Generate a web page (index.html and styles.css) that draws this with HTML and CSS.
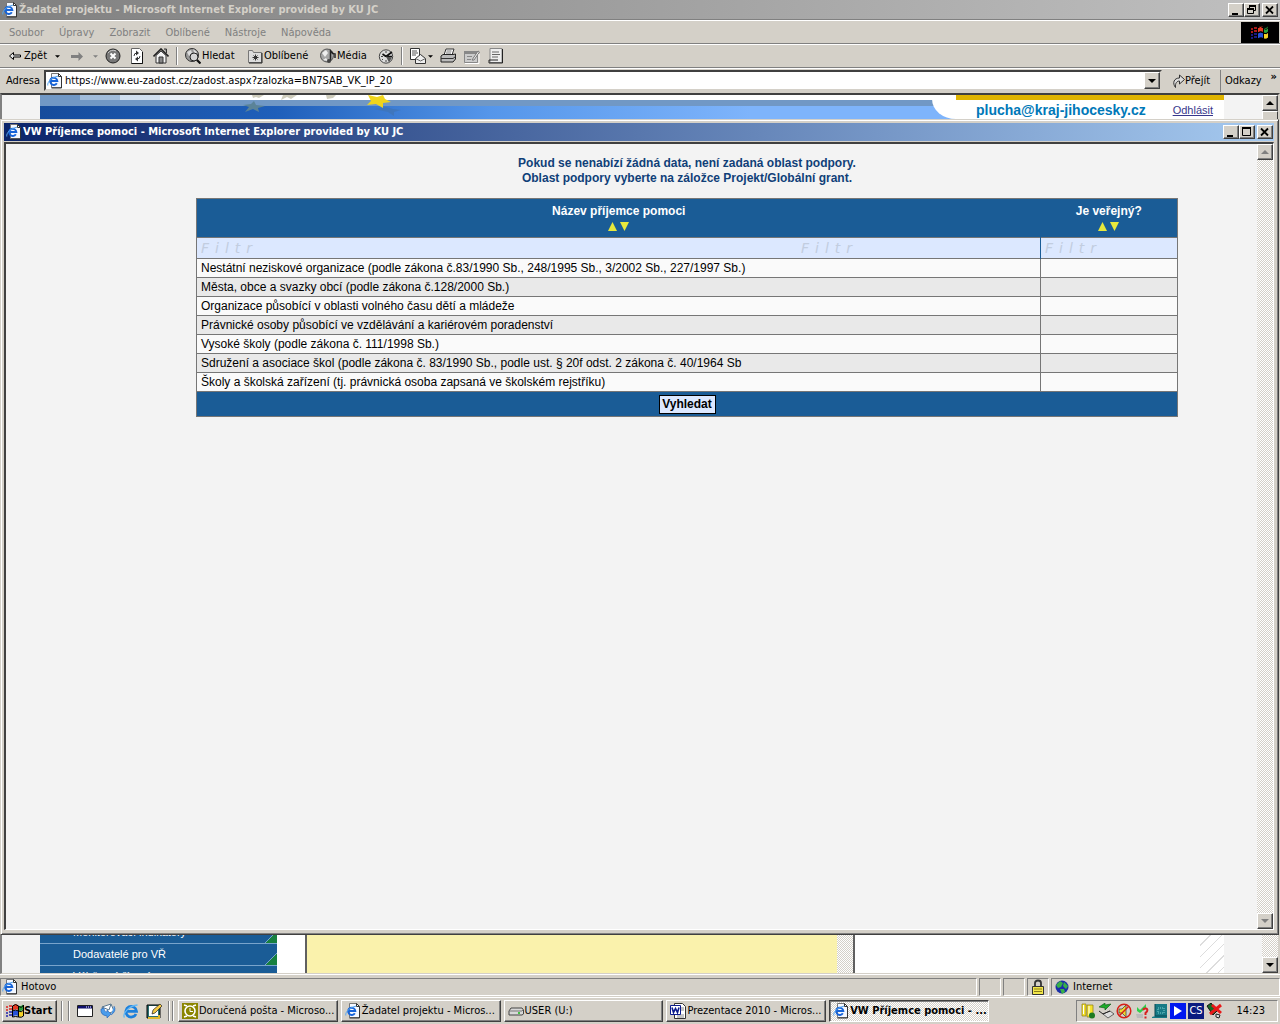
FILE: index.html
```html
<!DOCTYPE html>
<html lang="cs">
<head>
<meta charset="utf-8">
<title>VW Příjemce pomoci</title>
<link rel="stylesheet" href="styles.css">
</head>
<body>
<svg class="sprite" aria-hidden="true">
  <symbol id="ie-page" viewBox="0 0 16 16"><path d="M4.500.5h7l3 3v11h-10z" fill="#f4f8ff" stroke="#777"/><path d="M14.500 4v11h-10" fill="none" stroke="#333"/><path d="M11.500.5v3h3z" fill="#fff" stroke="#333"/><path d="M9.800 10.200A3.600 3.600 0 1 1 10.300 8H3.500" fill="none" stroke="#1663d8" stroke-width="2"/><path d="M.8 12.500C0 9 5 4 11 3.200" fill="none" stroke="#58a8f0"/></symbol>
  <symbol id="ie" viewBox="0 0 16 16"><path d="M13 11A5.300 5.300 0 1 1 13.500 8.300H4" fill="none" stroke="#1c80dc" stroke-width="2.800"/><path d="M1.500 14.500C-1 11 6 2.500 14.500 2" fill="none" stroke="#64b8f4" stroke-width="1.300"/></symbol>
  <symbol id="min" viewBox="0 0 12 10"><path d="M2 8h6v2H2z" fill="#000"/></symbol>
  <symbol id="max" viewBox="0 0 12 10"><path d="M1.500 1.500h8v7h-8zM1 1.500h9" fill="none" stroke="#000"/><path d="M1 0h9v2H1z"/></symbol>
  <symbol id="restore" viewBox="0 0 12 10"><path d="M3.500 3V1h6v4.500H8M1.500 4h6v4.500h-6z" fill="none" stroke="#000"/><path d="M3 0h7v2H3zM1 3h7v2H1z"/></symbol>
  <symbol id="close" viewBox="0 0 12 10"><path d="M2 1.500l7 7M9 1.500l-7 7" stroke="#000" stroke-width="1.800"/></symbol>
  <symbol id="up" viewBox="0 0 8 4"><path d="M0 4L4 0l4 4z"/></symbol>
  <symbol id="down" viewBox="0 0 8 4"><path d="M0 0l4 4 4-4z"/></symbol>
  <symbol id="back" viewBox="0 0 16 16"><path d="M2.500 8l4-3.500V7h7v2h-7v2.500z" fill="#e8e8e8" stroke="#000"/></symbol>
  <symbol id="fwd" viewBox="0 0 16 16"><path d="M14 8.500L9.500 4v3H2v3h7.500v3z" fill="#808080"/></symbol>
  <symbol id="flag" viewBox="0 0 18 16"><g transform="skewY(-5)"><path d="M7 3q3-2 5 0v5q-2-2-5 0z" fill="#e33a22"/><path d="M13 4q2 1 4-1v5q-2 2-4 1z" fill="#28a13c"/><path d="M7 9q3-2 5 0v5q-2-2-5 0z" fill="#2752d8"/><path d="M13 10q2 1 4-1v5q-2 2-4 1z" fill="#f5d228"/></g><path d="M6.500 3q3-3 6 0t5-1v11q-2 2-5 1t-6 0zM12.500 3v11M6.500 8q3-2 6 0t5-1" fill="none" stroke="#000"/><path d="M0 4h2M3 3h3M0 7h2M3 6h3" stroke="#d22" stroke-width="1.500"/><path d="M0 10h2M3 9h3M0 13h2M3 12h3" stroke="#22a" stroke-width="1.500"/></symbol>
</svg>

<main class="browser">
  <header class="titlebar inactive">
    <svg class="ico"><use href="#ie-page"/></svg><span class="caption">Žadatel projektu - Microsoft Internet Explorer provided by KU JC</span>
    <div class="winbtns"><button aria-label="Minimalizovat"><svg><use href="#min"/></svg></button><button aria-label="Obnovit"><svg><use href="#restore"/></svg></button><button class="x" aria-label="Zavřít"><svg><use href="#close"/></svg></button></div>
  </header>

  <nav class="band menubar"><span>Soubor</span><span>Úpravy</span><span>Zobrazit</span><span>Oblíbené</span><span>Nástroje</span><span>Nápověda</span>
    <div class="throbber"><svg width="18" height="16"><use href="#flag"/></svg></div>
  </nav>

  <div class="band toolbar">
    <button class="tool t-back"><svg class="ico"><use href="#back"/></svg>Zpět</button>
    <button class="tool t-caret" aria-label="Historie zpět"><svg class="caret"><use href="#down"/></svg></button>
    <button class="tool" aria-label="Vpřed"><svg class="ico"><use href="#fwd"/></svg></button>
    <button class="tool t-caret off" aria-label="Historie vpřed"><svg class="caret"><use href="#down"/></svg></button>
    <button class="tool" aria-label="Zastavit"><svg class="ico" viewBox="0 0 16 16"><circle cx="8" cy="8" r="7" fill="#777" stroke="#222"/><path d="M3 5a6 6 0 0 1 8-2" fill="none" stroke="#ccc"/><path d="M5.500 5.500l5 5M10.500 5.500l-5 5" stroke="#fff" stroke-width="2"/></svg></button>
    <button class="tool" aria-label="Aktualizovat"><svg class="ico" viewBox="0 0 16 16"><path d="M2.500.5h8l3 3v12h-11z" fill="#fff" stroke="#666"/><path d="M13.500 4v11.500h-11" fill="none" stroke="#111"/><path d="M5 8q0-3 3-3M11 8q0 3-3 3" fill="none" stroke="#333"/><path d="M7 2.500L10 5 7 7.500zM9 8.500L6 11l3 2.500z" fill="#333"/></svg></button>
    <button class="tool" aria-label="Domů"><svg class="ico" viewBox="0 0 16 16"><path d="M3 7.500v7.500h10V7.500L8 3z" fill="#f4f4f4" stroke="#333"/><path d="M.5 8.500L8 1l7.500 7.500" fill="none" stroke="#222" stroke-width="1.600"/><path d="M11 1h2.500v4" fill="#999" stroke="#333"/><path d="M6 9h4v6H6z" fill="#888" stroke="#333"/></svg></button>
    <i class="sep"></i>
    <button class="tool t-search"><svg class="ico" viewBox="0 0 16 16"><circle cx="7" cy="7" r="6.500" fill="#999" stroke="#333"/><path d="M2 4l4-2 1 3-3 3zM8 1l4 3-2 3z" fill="#ddd"/><circle cx="9" cy="9" r="4" fill="#eee" fill-opacity=".7" stroke="#222"/><path d="M12 12l3.500 3.500" stroke="#111" stroke-width="2.200"/></svg>Hledat</button>
    <button class="tool t-fav"><svg class="ico" viewBox="0 0 16 16"><path d="M1.500 14.500v-12h4l1 2h8v10z" fill="#ddd" stroke="#777"/><path d="M15 5v10H2" fill="none" stroke="#222"/><path d="M8.500 6.500v6M5.500 9.500h6M6.500 7.500l4 4M10.500 7.500l-4 4" stroke="#333"/></svg>Oblíbené</button>
    <button class="tool t-media"><svg class="ico" viewBox="0 0 16 16"><circle cx="7" cy="7.500" r="6.500" fill="#a5a5a5" stroke="#555"/><path d="M2 5l4-3 2 3-3 4zM3 12l3-2 2 3z" fill="#eee"/><path d="M10.500 13V3q2 3 4.500 3v4" fill="none" stroke="#222" stroke-width="1.500"/><circle cx="9" cy="13" r="2" fill="#444"/></svg>Média</button>
    <button class="tool" aria-label="Historie"><svg class="ico" viewBox="0 0 16 16"><circle cx="8" cy="8.500" r="6.700" fill="#ddd" stroke="#444"/><path d="M8 8.500L14 4M8 8.500h6M8 8.500L4.500 6" stroke="#111" stroke-width="1.600"/><path d="M8 3v2M3 8.500h2M8 14v-2M4 12l1-1M12 12l-1-1" stroke="#444"/><path d="M8 8.500l6 1-3 5z" fill="#555"/></svg></button>
    <i class="sep"></i>
    <button class="tool t-mail" aria-label="Pošta"><svg class="ico" viewBox="0 0 16 16"><path d="M.5.500h9v11h-9z" fill="#fff" stroke="#333"/><path d="M2 3h5M2 5h6M2 7h4" stroke="#555"/><path d="M5.500 10.500l5-4 5 4v5h-10z" fill="#eee" stroke="#333"/><path d="M5.500 10.500l5 2.500 5-2.500" fill="none" stroke="#666"/></svg><svg class="caret"><use href="#down"/></svg></button>
    <button class="tool" aria-label="Tisk"><svg class="ico" viewBox="0 0 16 16"><path d="M4 7l2-6h8l-2 6z" fill="#fff" stroke="#333"/><path d="M6.500 3h5M6 5h5" stroke="#777"/><path d="M1 8l2-1.500h10L15.500 6v5L13 14H1z" fill="#bbb" stroke="#222"/><path d="M1 10.500h12l2.500-2" fill="none" stroke="#333"/></svg></button>
    <button class="tool" aria-label="Upravit"><svg class="ico" viewBox="0 0 16 16"><path d="M.5 3.500h13v11H.500z" fill="#ccc" stroke="#888"/><path d="M0 3h14v3H0z" fill="#888"/><path d="M3 8.500h5M3 11.500h4" stroke="#888"/><path d="M8 12l6-9 1.500 1L10 12z" fill="#eee" stroke="#777"/><path d="M1 15.500h14V6" fill="none" stroke="#fff"/></svg></button>
    <button class="tool" aria-label="Diskuse"><svg class="ico" viewBox="0 0 16 16"><path d="M2 .5h12v14H2z" fill="#eee" stroke="#888"/><path d="M14.500 1v14H1v-3h9" fill="none" stroke="#222"/><path d="M4 4h7M4 6.500h8M4 9h6" stroke="#666"/></svg></button>
  </div>

  <div class="band address">
    <label for="url">Adresa</label>
    <div class="urlbox"><svg class="ico"><use href="#ie-page"/></svg><input id="url" value="https://www.eu-zadost.cz/zadost.aspx?zalozka=BN7SAB_VK_IP_20"><button class="drop" aria-label="Seznam adres"><svg class="caret wide"><use href="#down"/></svg></button></div>
    <button class="go"><svg width="13" height="14" viewBox="0 0 13 14"><path d="M3.500 13.500C0 9 2 4 7.500 4V1l5 4.500-5 4.500V7C5 7 3 9 3.500 13.500z" fill="#ddd" stroke="#333"/></svg>Přejít</button>
    <span class="links">Odkazy <b>»</b></span>
  </div>

  <section class="view">
    <div class="page">
      <div class="banner">
        <div class="squares"></div><div class="strip"></div>
        <svg class="stars" viewBox="0 0 200 24"><path d="M14 6l2 4 9 1-7 2 1 4-6-3-8 3 4-5-6-2 8-1z" fill="#5b8398"/><path d="M12 0h12l-5 3-3-1-3 1zM43 0h14l-6 4-4-2-6 3zM86 0h10l-3 3-6 1z" fill="#cfcdbd"/><path d="M134 14l12-2 7 2 8 1-7 2 0 4-6-4z" fill="#3f74b4" opacity=".7"/><path d="M128 0l9 2 6-2 2 4 6 3-8 1 0 5-7-4-9 1 4-4z" fill="#f0d51c"/></svg>
        <div class="account"><a class="mail" href="#ucet">plucha@kraj-jihocesky.cz</a><a class="logout" href="#odhlasit">Odhlásit</a></div>
      </div>
      <div class="content">
        <ul class="sidemenu"><li><a href="#ind">Monitorovací indikátory</a></li><li><a href="#dod">Dodavatelé pro VŘ</a></li><li><a href="#vyb">Výběrová řízení</a></li></ul>
        <div class="panel"><div class="panel-body"></div><div class="track"></div></div>
        <div class="hatch"></div>
      </div>
    </div>
    <div class="scroll live"><button aria-label="Nahoru"><svg class="caret wide"><use href="#up"/></svg></button><div class="thumb"></div><div class="track"></div><button aria-label="Dolů"><svg class="caret wide"><use href="#down"/></svg></button></div>
  </section>

  <footer class="status">
    <div class="cell grow"><svg class="ico"><use href="#ie-page"/></svg>Hotovo</div><div class="cell"></div><div class="cell"></div>
    <div class="cell"><svg class="ico" viewBox="0 0 16 16"><path d="M5 8V4q0-2.500 3-2.500T11 4v4" fill="none" stroke="#333" stroke-width="1.800"/><path d="M2.500 7.500h11v8h-11z" fill="#f2e64a" stroke="#333"/><path d="M4 10h8M4 12.500h8" stroke="#8a7d18"/></svg></div>
    <div class="cell zone"><svg class="ico" viewBox="0 0 16 16"><circle cx="8" cy="8" r="6.500" fill="#1a2ea8"/><path d="M2 6l4-4 3 2-2 4-3 1zM10 3l4 4-2 3-3-3zM6 10l4 0 1 3-3 2z" fill="#38b048"/></svg>Internet</div>
  </footer>
</main>

<footer class="taskbar">
  <button class="start"><svg width="18" height="16"><use href="#flag"/></svg>Start</button>
  <i class="grip"></i>
  <div class="quick">
    <button aria-label="Plocha"><svg class="ico" viewBox="0 0 16 16"><path d="M.5 2.500h15v11H.500z" fill="#fff" stroke="#222"/><path d="M1 3h14v2.500H1z" fill="#10106c"/><path d="M9 4h5" stroke="#fff" stroke-dasharray="1 1"/></svg></button>
    <button aria-label="Outlook"><svg class="ico" viewBox="0 0 16 16"><path d="M2 4l9-3 3 7-9 4z" fill="#fff" stroke="#5a7890"/><path d="M2 4l7 3 2-6" fill="none" stroke="#5a7890"/><path d="M1 6q-1 6 6 7v2l4-4-4-4v2q-3 0-3-4zM14 3q3 5-3 9" fill="#4a9cec" stroke="#2560b0" stroke-width=".6"/></svg></button>
    <button aria-label="Internet Explorer"><svg class="ico"><use href="#ie"/></svg></button>
    <button aria-label="Poznámky"><svg class="ico" viewBox="0 0 16 16"><path d="M1 2h13v13H1z" fill="#2b6f6f" stroke="#000"/><path d="M3 3h9v10H3z" fill="#fff"/><path d="M6 11l1-4 7-6 2 2-7 7z" fill="#f5c842" stroke="#222" stroke-width=".7"/><path d="M2 15h11v-3" fill="none" stroke="#e2b92e" stroke-width="2"/></svg></button>
  </div>
  <i class="grip near"></i>
  <div class="tasks">
    <button><svg class="ico" viewBox="0 0 16 16"><path d="M0 0h16v16H0z" fill="#8a8500"/><path d="M2 2l3 1M14 2l-3 1M2 14l3-1M14 14l-3-1" stroke="#fff" stroke-width="1.500"/><circle cx="8" cy="8" r="5" fill="none" stroke="#fff" stroke-width="1.600"/><path d="M8 5v3.500h3" fill="none" stroke="#fff"/></svg><span>Doručená pošta - Microso...</span></button>
    <button><svg class="ico"><use href="#ie-page"/></svg><span>Žadatel projektu - Micros...</span></button>
    <button><svg class="ico" viewBox="0 0 16 16"><path d="M1 8l2-3h11l1.500 2v4L14 12H1z" fill="#d8d8d8" stroke="#444"/><path d="M1 8h13l1-1" fill="none" stroke="#777"/><path d="M10 10h2" stroke="#1b1" stroke-width="1.500"/></svg><span>USER (U:)</span></button>
    <button><svg class="ico" viewBox="0 0 16 16"><path d="M4.500.5h8l3 3v12h-11z" fill="#fff" stroke="#333"/><path d="M11 5h3M11 7h3M7 12h7M7 14h7" stroke="#888"/><path d="M.5 2.500h10v9H.500z" fill="#fff" stroke="#0a1a8c"/><path d="M2 4.500l1.500 5 2-4 2 4 1.500-5" fill="none" stroke="#0a1a8c" stroke-width="1.600"/></svg><span>Prezentace 2010 - Micros...</span></button>
    <button class="pressed"><svg class="ico"><use href="#ie-page"/></svg><span>VW Příjemce pomoci - ...</span></button>
  </div>
  <div class="tray">
    <svg class="ico" viewBox="0 0 16 16"><path d="M2 1h4v12H2zM7 2h6v12H7z" fill="#f6e32c" stroke="#8a7a10" stroke-width=".7"/><path d="M3.500 2v9M9 3v9" stroke="#fff"/><circle cx="12" cy="12.500" r="3" fill="#1d7a22"/></svg>
    <svg class="ico" viewBox="0 0 16 16"><path d="M5 11l7-3 4 3-6 4z" fill="#ddd" stroke="#333" stroke-width=".7"/><path d="M1 8l4 3 7-3" fill="none" stroke="#222"/><path d="M1 4l6-4v2l6-1-6 6v-2z" fill="#1dac2a" stroke="#0a5012" stroke-width=".6"/></svg>
    <svg class="ico" viewBox="0 0 16 16"><path d="M3 6h3l4-4v12l-4-4H3z" fill="#f0d830" stroke="#333" stroke-width=".7"/><circle cx="8" cy="8" r="6.800" fill="none" stroke="#d82018" stroke-width="1.500"/><path d="M3.500 12.500l9-9" stroke="#d82018" stroke-width="1.500"/></svg>
    <svg class="ico" viewBox="0 0 16 16"><path d="M3 4l3 3 6-6v4L6 10 3 8z" fill="#2ed04a"/><path d="M2 11h7v4H3z" fill="#bbb"/><path d="M9 7q1-2 3-1.500t1 3L11.500 10v2M11.500 13.500v2" fill="none" stroke="#d82020" stroke-width="2"/></svg>
    <svg class="ico" viewBox="0 0 16 16"><path d="M3 1h12v12H3zM0 14l3-1h12v2H0z" fill="#177a86"/><path d="M3 1v12h12" fill="none" stroke="#0b4650"/><path d="M6 5h6v5H6z" fill="none" stroke="#7fd0d0" stroke-dasharray="1 1"/></svg>
    <svg class="ico" viewBox="0 0 16 16"><path d="M0 0h16v16H0z" fill="#0018f0"/><path d="M4 3v10l8-5z" fill="#fff"/></svg>
    <span class="lang">CS</span>
    <svg class="ico" viewBox="0 0 16 16"><path d="M1 3l4-3 6 8-4 4z" fill="#186a26" stroke="#111"/><path d="M10 11l4 1-1 3-3-1z" fill="#ddd" stroke="#222"/><path d="M4 11L15 2M6 2l9 8" stroke="#e81818" stroke-width="3"/></svg>
    <time>14:23</time>
  </div>
</footer>

<div class="popup" role="dialog" aria-label="VW Příjemce pomoci">
  <header class="titlebar">
    <svg class="ico"><use href="#ie-page"/></svg><span class="caption">VW Příjemce pomoci - Microsoft Internet Explorer provided by KU JC</span>
    <div class="winbtns"><button aria-label="Minimalizovat"><svg><use href="#min"/></svg></button><button aria-label="Maximalizovat"><svg><use href="#max"/></svg></button><button class="x" aria-label="Zavřít"><svg><use href="#close"/></svg></button></div>
  </header>
  <div class="popup-view">
    <form class="popup-body">
      <p class="notice">Pokud se nenabízí žádná data, není zadaná oblast podpory.<br>Oblast podpory vyberte na záložce Projekt/Globální grant.</p>
      <table class="grid">
        <colgroup><col><col class="c-public"></colgroup>
        <thead>
          <tr class="head">
            <th>Název příjemce pomoci<div class="sort"><button type="button" aria-label="Vzestupně"><svg viewBox="0 0 9 9"><path d="M0 9L4.500 0 9 9z"/></svg></button><button type="button" aria-label="Sestupně"><svg viewBox="0 0 9 9"><path d="M0 0h9L4.500 9z"/></svg></button></div></th>
            <th>Je veřejný?<div class="sort"><button type="button" aria-label="Vzestupně"><svg viewBox="0 0 9 9"><path d="M0 9L4.500 0 9 9z"/></svg></button><button type="button" aria-label="Sestupně"><svg viewBox="0 0 9 9"><path d="M0 0h9L4.500 9z"/></svg></button></div></th>
          </tr>
          <tr class="filter">
            <td><div class="filters"><input class="long" aria-label="Filtr názvu" placeholder="Filtr"><input aria-label="Další filtr názvu" placeholder="Filtr"></div></td>
            <td><div class="filters"><input aria-label="Filtr veřejný" placeholder="Filtr"></div></td>
          </tr>
        </thead>
        <tbody>
          <tr><td>Nestátní neziskové organizace (podle zákona č.83/1990 Sb., 248/1995 Sb., 3/2002 Sb., 227/1997 Sb.)</td><td></td></tr>
          <tr><td>Města, obce a svazky obcí (podle zákona č.128/2000 Sb.)</td><td></td></tr>
          <tr><td>Organizace působící v oblasti volného času dětí a mládeže</td><td></td></tr>
          <tr><td>Právnické osoby působící ve vzdělávání a kariérovém poradenství</td><td></td></tr>
          <tr><td>Vysoké školy (podle zákona č. 111/1998 Sb.)</td><td></td></tr>
          <tr><td>Sdružení a asociace škol (podle zákona č. 83/1990 Sb., podle ust. § 20f odst. 2 zákona č. 40/1964 Sb</td><td></td></tr>
          <tr><td>Školy a školská zařízení (tj. právnická osoba zapsaná ve školském rejstříku)</td><td></td></tr>
        </tbody>
        <tfoot><tr><td colspan="2"><button type="button" class="search">Vyhledat</button></td></tr></tfoot>
      </table>
    </form>
    <div class="scroll disabled"><button aria-label="Nahoru"><svg class="caret wide"><use href="#up"/></svg></button><div class="track"></div><button aria-label="Dolů"><svg class="caret wide"><use href="#down"/></svg></button></div>
  </div>
</div>
</body>
</html>
```
FILE: styles.css
```css
:root {
  --face: #d4d0c8;
  --shadow: #808080;
  --dark: #404040;
  --blue: #1a5c96;
  --ui: "DejaVu Sans Condensed", "Noto Sans", sans-serif;
}
* { box-sizing: border-box; }
body {
  margin: 0;
  height: 100vh;
  display: flex;
  flex-direction: column;
  position: relative;
  overflow: hidden;
  background: var(--face);
  color: #000;
  font: 11px/14px var(--ui);
}
button, input { font: inherit; color: inherit; margin: 0; padding: 0; border: 0; background: none; }
svg { flex: none; }
.sprite { position: absolute; width: 0; height: 0; }
.ico { width: 16px; height: 16px; }
.caret { width: 5px; height: 3px; }
.caret.wide { width: 8px; height: 4px; }

.browser { flex: 1; min-height: 0; display: flex; flex-direction: column; }

/* title bars */
.titlebar {
  display: flex;
  align-items: center;
  gap: 1px;
  height: 18px;
  padding: 0 1px 0 2px;
  font-weight: bold;
  color: #fff;
  background: linear-gradient(90deg, #0a246a, #a6caf0);
}
.titlebar.inactive { height: 19px; padding-right: 2px; color: var(--face); background: linear-gradient(90deg, #808080, #c0c0c0); }
.caption { flex: 1; white-space: nowrap; }
.winbtns { display: flex; }
.winbtns button, .scroll button, .drop {
  display: flex;
  align-items: center;
  justify-content: center;
  background: var(--face);
  border: 1px solid;
  border-color: #fff var(--dark) var(--dark) #fff;
  box-shadow: inset -1px -1px var(--shadow);
}
.winbtns button { width: 16px; height: 14px; }
.winbtns svg { width: 12px; height: 10px; }
.winbtns .x { margin-left: 2px; }

/* browser bars */
.band {
  display: flex;
  align-items: center;
  height: 24px;
  flex: none;
  border-top: 1px solid var(--shadow);
  box-shadow: inset 0 1px #fff;
}
.menubar { gap: 15px; padding: 2px 0 0 9px; color: var(--shadow); }
.throbber { margin-left: auto; align-self: stretch; width: 38px; margin-right: 1px; display: flex; align-items: center; justify-content: center; background: #000; }
.toolbar { padding: 1px 0 0 5px; }
.tool { display: flex; align-items: center; justify-content: center; gap: 1px; width: 24px; height: 20px; flex: none; white-space: nowrap; }
.t-back { width: 44px; }
.t-caret { width: 16px; }
.t-caret.off { width: 12px; }
.t-search, .t-fav, .t-media { justify-content: flex-start; padding-left: 4px; }
.t-search { width: 62px; }
.t-fav { width: 73px; }
.t-media { width: 58px; }
.t-mail { width: 30px; gap: 2px; }
.off { fill: var(--shadow); }
.sep { width: 2px; height: 18px; margin: 0 3px; border-left: 1px solid var(--shadow); border-right: 1px solid #fff; }
.address { gap: 4px; padding: 2px 3px 0 6px; }
.urlbox {
  flex: 1;
  display: flex;
  align-items: center;
  gap: 2px;
  height: 21px;
  padding-left: 1px;
  background: #fff;
  border: 2px solid;
  border-color: var(--dark) var(--face) var(--face) var(--dark);
}
.urlbox input { flex: 1; min-width: 0; height: 16px; }
.drop { width: 16px; height: 17px; }
.go { display: flex; align-items: center; width: 50px; padding-left: 6px; }
.links { display: flex; justify-content: space-between; width: 57px; height: 22px; line-height: 22px; padding-left: 4px; border-left: 1px solid var(--shadow); white-space: nowrap; }
.links b { line-height: 14px; }

/* page behind the popup */
.view {
  flex: 1;
  min-height: 0;
  display: flex;
  margin-top: 2px;
  border: 2px solid;
  border-color: var(--dark) var(--face) var(--face) var(--shadow);
  border-bottom-width: 1px;
}
.page { flex: 1; display: flex; flex-direction: column; padding: 0 38px; background: #f3f3f3; overflow: hidden; font-family: "Liberation Sans", Arial, sans-serif; }
.banner { position: relative; height: 48px; background: #7eb4fb linear-gradient(90deg, #164c9c, #1f5fba 20%, #5596ea 38%, #7eb4fb 60%); flex: none; }
.squares { height: 5px; background: linear-gradient(90deg, #7198c5 40px, #a0bbda 40px 80px, #d0deee 80px 120px, #e8eff7 120px 160px, #fff 160px); }
.strip { height: 6px; background: #7198c5; }
.stars { position: absolute; left: 200px; top: 0; width: 200px; height: 24px; }
.account {
  position: absolute;
  right: 0;
  top: 0;
  width: 292px;
  height: 24px;
  padding: 5px 11px 0 44px;
  display: flex;
  align-items: center;
  justify-content: space-between;
  background: linear-gradient(90deg, #fff 24px, #e0b400 24px) top / 100% 5px no-repeat #fff;
  border-bottom-left-radius: 24px 20px;
}
.mail { color: #0078b8; font-size: 14px; font-weight: bold; text-decoration: none; }
.logout { color: #38388c; font-size: 11px; }
.content { flex: 1; min-height: 0; display: flex; align-items: stretch; background: #fff; overflow: hidden; }
.sidemenu { align-self: flex-end; list-style: none; width: 237px; margin: 0 28px -15px 0; padding: 0; }
.sidemenu li { height: 22px; line-height: 20px; border-bottom: 1px solid #78a4cc; padding-left: 33px; background: linear-gradient(135deg, transparent 50%, #78a4cc 50% 56%, #178040 56%) right bottom / 13px 13px no-repeat var(--blue); }
.sidemenu a { color: #fff; text-decoration: none; }
.panel { display: flex; width: 550px; border: solid #606060; border-width: 0 2px; }
.panel-body { flex: 1; background: #faf2ac; }
.panel .track { flex: none; width: 16px; }
.hatch { margin-left: auto; width: 24px; background: repeating-linear-gradient(135deg, #fff 0 7px, #ddd 7px 8px); }

/* scroll bars */
.track { flex: 1; background: repeating-conic-gradient(#fff 0 25%, var(--face) 0 50%) 0 0 / 2px 2px; }
.scroll { display: flex; flex-direction: column; width: 16px; flex: none; }
.scroll button { height: 16px; flex: none; }
.thumb { height: 40px; background: var(--face); border: 1px solid; border-color: #fff var(--dark) var(--dark) #fff; }
.disabled { fill: var(--shadow); }

/* status bar */
.status { display: flex; gap: 2px; height: 23px; padding-top: 3px; border-top: 1px solid #fff; }
.cell { display: flex; align-items: center; gap: 3px; width: 22px; height: 18px; padding-left: 2px; border: 1px solid; border-color: var(--shadow) #fff #fff var(--shadow); }
.grow { flex: 1; padding-left: 1px; }
.zone { width: 229px; }

/* task bar */
.taskbar { display: flex; align-items: center; height: 27px; flex: none; padding: 0 2px; border-top: 1px solid #fff; }
.start, .tasks button {
  display: flex;
  align-items: center;
  height: 22px;
  border: 1px solid;
  border-color: #fff var(--dark) var(--dark) #fff;
  box-shadow: inset -1px -1px var(--shadow);
}
.start { width: 55px; padding-left: 3px; font-weight: bold; }
.grip { width: 8px; height: 20px; margin: 0 8px 0 4px; border: 1px solid var(--shadow); border-width: 0 1px; box-shadow: 1px 0 #fff, inset 1px 0 #fff; }
.grip.near { width: 5px; margin: 0 5px 0 8px; }
.quick { display: flex; gap: 7px; margin-right: -2px; }
.quick button, .quick svg { display: block; width: 16px; height: 16px; }
.tasks { flex: 1; min-width: 0; display: flex; gap: 3px; padding-right: 87px; }
.tasks button { flex: 1; min-width: 0; gap: 1px; padding: 0 0 0 3px; text-align: left; }
.tasks span { white-space: nowrap; }
.tasks .pressed {
  font-weight: bold;
  background: repeating-conic-gradient(#fff 0 25%, var(--face) 0 50%) 0 0 / 2px 2px;
  border-color: var(--dark) #fff #fff var(--dark);
  box-shadow: inset 1px 1px var(--shadow);
}
.tray { display: flex; align-items: center; gap: 2px; width: 202px; height: 22px; padding: 0 12px 0 3px; border: 1px solid; border-color: var(--shadow) #fff #fff var(--shadow); }
.lang { width: 16px; height: 16px; line-height: 16px; text-align: center; color: #fff; background: #0a1a80; }
.tray time { margin-left: auto; }

/* popup window */
.popup {
  position: absolute;
  inset: 119px 1px 89px 0;
  display: flex;
  flex-direction: column;
  padding: 2px 4px 4px 2px;
  background: var(--face);
  border: 1px solid;
  border-color: var(--face) var(--dark) var(--dark) var(--face);
  box-shadow: inset 1px 1px #fff, inset -1px -1px var(--shadow);
}
.popup .titlebar { flex: none; margin: 1px 0 1px 1px; }
.popup-view { flex: 1; min-height: 0; display: flex; margin-left: 1px; border: 2px solid; border-color: var(--dark) #fff #fff var(--dark); border-right-width: 1px; border-bottom-width: 1px; background: #f3f3f3; }
.popup-body { flex: 1; padding: 12px 79px 0 190px; font: 12px/15px "Liberation Sans", Arial, sans-serif; }
.notice { margin: 0 0 12px; text-align: center; font-weight: bold; color: #103f78; }
.grid { width: 100%; table-layout: fixed; border-collapse: collapse; border: 1px solid #767676; }
.c-public { width: 137px; }
.grid tr { border: 1px solid #767676; }
.grid td { padding: 0 4px; height: 19px; line-height: 18px; }
.head { background: var(--blue); color: #fff; }
.head th { height: 39px; padding: 5px 0 0; line-height: 15px; vertical-align: top; }
.sort { display: flex; justify-content: center; gap: 3px; padding-top: 3px; }
.sort button, .sort svg { display: block; width: 9px; height: 9px; fill: #e8e83c; }
.grid .filter td { height: 21px; background: #dce8ff; }
.grid .filter td + td { border-left: 1px solid var(--blue); }
.filters { display: flex; }
.filters input { min-width: 0; flex: 1; height: 18px; font-family: "DejaVu Sans", sans-serif; font-size: 14px; font-style: italic; letter-spacing: 6px; }
.filters .long { flex: 0 0 600px; }
.filters input::placeholder { color: #c2cde0; opacity: 1; }
.grid tbody td { background: #fafafa; }
.grid tbody td + td { border-left: 1px solid #767676; }
.grid tbody tr:nth-child(even) td { background: #e9e9e9; }
.grid tfoot td { height: 25px; text-align: center; background: var(--blue); }
.search { height: 19px; width: 57px; border: 1px solid #000; background: #dce8ff; color: #000; font-weight: bold; line-height: 15px; vertical-align: middle; }
```
